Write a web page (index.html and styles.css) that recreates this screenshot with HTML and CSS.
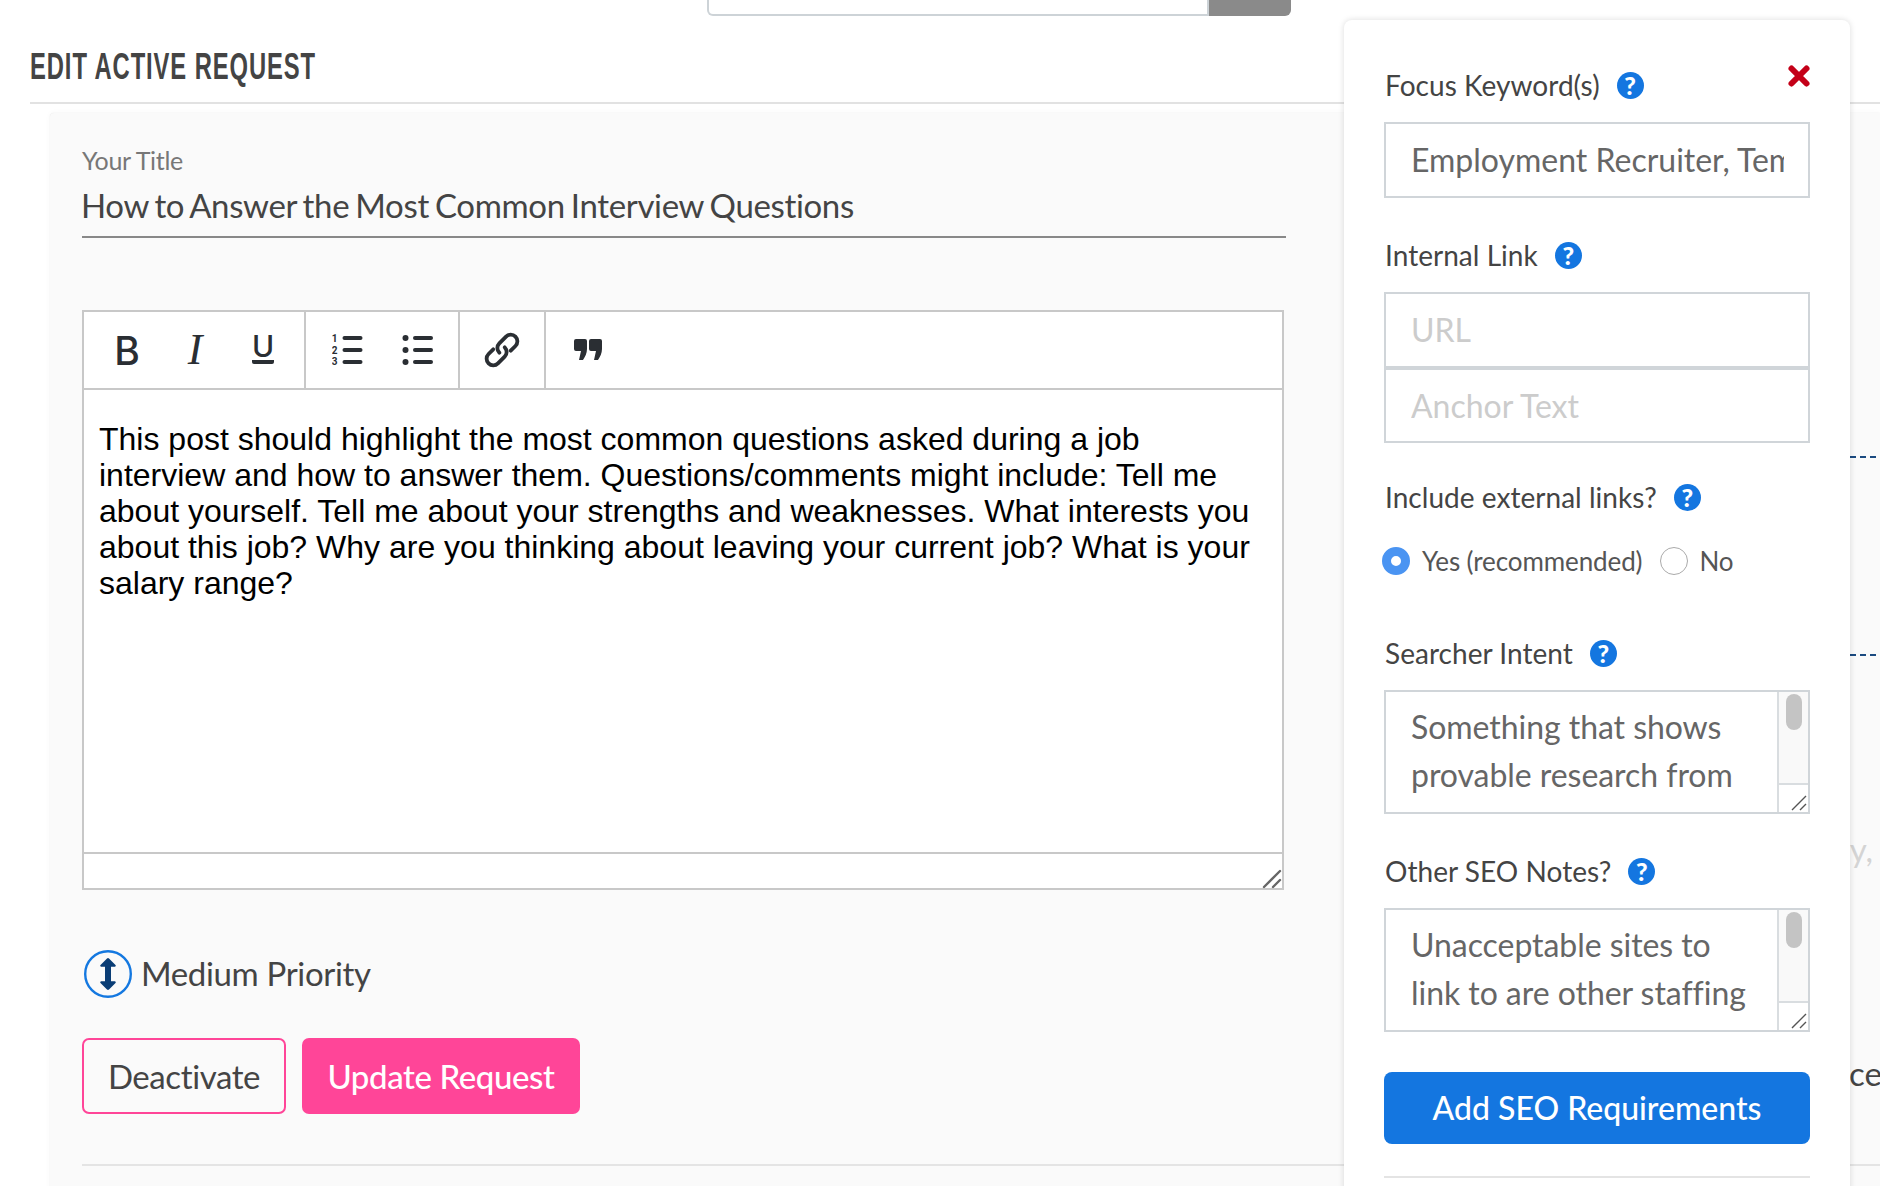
FILE: index.html
```html
<!DOCTYPE html>
<html lang="en">
<head>
<meta charset="utf-8">
<title>Edit Active Request</title>
<link rel="stylesheet" href="styles.css">
</head>
<body>
<div class="topbar"><div class="search-box"></div><div class="search-btn"></div></div>
<header class="page-head"><h1>EDIT ACTIVE REQUEST</h1></header>
<main class="card">
  <div class="card-row">
    <form class="form">
      <label class="title-label" for="title">Your Title</label>
      <input class="title-input" id="title" type="text" value="How to Answer the Most Common Interview Questions">
      <div class="editor">
        <div class="toolbar">
          <div class="tb-group g1">
            <span class="tb"><span class="ic-b">B</span></span>
            <span class="tb"><span class="ic-i">I</span></span>
            <span class="tb"><span class="ic-u">U</span></span>
          </div>
          <div class="tb-group g2">
            <span class="tb wide ol"><svg width="32" height="36" viewBox="0 0 32 36"><g class="num"><text x="2.5" y="9.5">1</text><text x="2.5" y="21.5">2</text><text x="2.5" y="33">3</text></g><rect x="10.500" y="4" width="20" height="4" rx="2"/><rect x="10.500" y="16" width="20" height="4" rx="2"/><rect x="10.500" y="28" width="20" height="4" rx="2"/></svg></span>
            <span class="tb wide"><svg width="32" height="36" viewBox="0 0 32 36"><circle cx="3.500" cy="6" r="3"/><circle cx="3.500" cy="18" r="3"/><circle cx="3.500" cy="30" r="3"/><rect x="11" y="4" width="20" height="4" rx="2"/><rect x="11" y="16" width="20" height="4" rx="2"/><rect x="11" y="28" width="20" height="4" rx="2"/></svg></span>
          </div>
          <div class="tb-group g3">
            <svg width="38" height="38" viewBox="0 0 40 40"><g class="chain" transform="rotate(-45 20 20)"><path d="M14 13H7a7 7 0 0 0 0 14H17a7 7 0 0 0 7-7"/><path d="M26 27H33a7 7 0 0 0 0-14H23a7 7 0 0 0-7 7"/></g></svg>
          </div>
          <div class="tb-group g4">
            <svg width="30" height="22" viewBox="0 0 30 22"><path d="M1 2a2 2 0 0 1 2-2h9a2 2 0 0 1 2 2v8c0 4-2 8-4 11H6l2-9H3a2 2 0 0 1-2-2z"/><path d="M16 2a2 2 0 0 1 2-2h9a2 2 0 0 1 2 2v8c0 4-2 8-4 11h-4l2-9h-5a2 2 0 0 1-2-2z"/></svg>
          </div>
        </div>
        <div class="editor-body">This post should highlight the most common questions asked during a job<br>interview and how to answer them. Questions/comments might include: Tell me<br>about yourself. Tell me about your strengths and weaknesses. What interests you<br>about this job? Why are you thinking about leaving your current job? What is your<br>salary range?</div>
        <div class="editor-foot"><svg class="grip" width="20" height="20" viewBox="0 0 20 20"><path d="M2 18L18 2M11 18l7-7"/></svg></div>
      </div>
      <div class="priority">
        <svg width="48" height="48" viewBox="0 0 48 48"><circle class="ring" cx="24" cy="24" r="22.800"/><path class="arrow" d="M23 8.500a1.500 1.500 0 0 1 2 0l6.500 6.500a1 1 0 0 1-.7 1.700H27V31.300h3.800a1 1 0 0 1 .7 1.700L25 39.500a1.500 1.500 0 0 1-2 0L16.500 33a1 1 0 0 1 .7-1.700H21V16.700h-3.800a1 1 0 0 1-.7-1.700z"/></svg>
        <span>Medium Priority</span>
      </div>
      <div class="actions">
        <button class="btn btn-outline" type="button">Deactivate</button>
        <button class="btn btn-solid" type="button">Update Request</button>
      </div>
    </form>
    <div class="behind">
      <div class="dash first"></div>
      <div class="dash second"></div>
      <div class="ghost">ncy,</div>
      <div class="ghost-dark">ance</div>
    </div>
  </div>
  <div class="card-rule"></div>
</main>

<aside class="panel">
  <div class="field-label first-label">
    <span>Focus Keyword(s)</span><span class="help">?</span>
    <svg class="close" width="24" height="24" viewBox="0 0 24 24"><path d="M4.500 4.500L19.500 19.500M19.500 4.500L4.500 19.500"/></svg>
  </div>
  <input class="text-input" type="text" value="Employment Recruiter, Temp Agency">

  <div class="field-label gap42"><span>Internal Link</span><span class="help">?</span></div>
  <input class="text-input tall" type="text" placeholder="URL">
  <input class="text-input joined" type="text" placeholder="Anchor Text">

  <div class="field-label gap39"><span>Include external links?</span><span class="help">?</span></div>
  <div class="radios">
    <input class="radio" type="radio" name="ext" id="yes" checked><label for="yes">Yes (recommended)</label>
    <input class="radio" type="radio" name="ext" id="no"><label for="no">No</label>
  </div>

  <div class="field-label gap64"><span>Searcher Intent</span><span class="help">?</span></div>
  <div class="ta">
    <div class="ta-text">Something that shows<br>provable research from</div>
    <div class="sb"><div class="sb-track"><div class="sb-thumb"></div></div><div class="sb-corner"><svg width="16" height="16" viewBox="0 0 16 16"><path d="M1 15L15 1M9 15l6-6"/></svg></div></div>
  </div>

  <div class="field-label gap42"><span>Other SEO Notes?</span><span class="help">?</span></div>
  <div class="ta">
    <div class="ta-text">Unacceptable sites to<br>link to are other staffing</div>
    <div class="sb"><div class="sb-track"><div class="sb-thumb"></div></div><div class="sb-corner"><svg width="16" height="16" viewBox="0 0 16 16"><path d="M1 15L15 1M9 15l6-6"/></svg></div></div>
  </div>

  <button class="add-btn" type="button">Add SEO Requirements</button>
  <div class="panel-rule"></div>
</aside>
</body>
</html>
```

FILE: styles.css
```css
* { box-sizing: border-box; }
html, body { margin: 0; padding: 0; }
body {
  position: relative;
  width: 1880px;
  height: 1186px;
  overflow: hidden;
  background: #fff;
  font-family: Lato, "Noto Sans", sans-serif;
  color: #444;
}

/* top strip */
.topbar { display: flex; width: 584px; height: 16px; margin-left: 707px; }
.search-box { flex: 1; border: 2px solid #cdd3d7; border-top: 0; border-radius: 0 0 0 6px; background: #fff; }
.search-btn { width: 82px; background: #8a8a8a; border-radius: 0 0 6px 0; }

/* heading */
.page-head { height: 88px; margin-left: 30px; border-bottom: 2px solid #e2e2e2; }
.page-head h1 {
  margin: 0;
  padding-top: 31px;
  font-family: "Liberation Sans Narrow", "Liberation Sans", sans-serif;
  font-size: 36px;
  line-height: 40px;
  font-weight: 700;
  letter-spacing: 1.4px;
  color: #444;
  white-space: nowrap;
  transform: scaleX(0.66);
  transform-origin: left center;
}

/* card */
.card {
  margin: 9px 0 0 50px;
  padding: 33px 0 0 32px;
  height: 1100px;
  background: #fafafa;
  box-shadow: 0 0 6px rgba(0,0,0,.035), 0 0 1px rgba(0,0,0,.12);
  border-radius: 4px 0 0 0;
}
.card-row { display: flex; }
.form { width: 1204px; flex: none; }
.title-label { display: block; height: 30px; padding-bottom: 2px; font-size: 25px; letter-spacing: -0.3px; line-height: 28px; color: #777; }
.title-input {
  display: block;
  width: 100%;
  height: 62px;
  padding: 0 0 2px;
  border: 0;
  border-bottom: 2px solid #888;
  background: transparent;
  font: 400 33px/58px Lato, sans-serif;
  letter-spacing: -0.35px;
  word-spacing: -2px;
  text-indent: -1px;
  color: #444;
  outline: none;
}

/* rich text editor */
.editor { width: 1202px; margin-top: 72px; border: 2px solid #c8c8c8; background: #fff; }
.toolbar { display: flex; height: 78px; border-bottom: 2px solid #c8c8c8; }
.tb-group { display: flex; align-items: center; border-right: 2px solid #c8c8c8; }
.g1 { width: 222px; padding-left: 9px; }
.g2 { width: 154px; padding-left: 5px; }
.g3 { width: 86px; justify-content: center; }
.g4 { flex: 1; border-right: 0; padding-left: 27px; }
.tb { display: flex; width: 68px; height: 76px; align-items: center; justify-content: center; color: #2a2e33; }
.tb.wide { width: 71px; }
.tb.ol svg { margin-left: 2px; }
.ic-b { font: 500 39px/1 Inter, Roboto, sans-serif; }
.ic-i { font: italic 400 44px/1 "Liberation Serif", serif; }
.ic-u { display: block; height: 28px; font: 500 30px/21px Inter, Roboto, sans-serif; border-bottom: 4px solid #2a2e33; border-radius: 2px; }
.toolbar svg { fill: #2a2e33; display: block; }
.num text { font: 700 10px Roboto, sans-serif; text-anchor: middle; }
.toolbar .chain path { fill: none; stroke: #2a2e33; stroke-width: 4; stroke-linecap: round; }

.editor-body {
  height: 464px;
  padding: 31px 15px 0;
  font: 400 32px/36px "Liberation Sans", Arial, sans-serif;
  color: #000;
  white-space: nowrap;
  border-bottom: 2px solid #c8c8c8;
}
.editor-foot { display: flex; height: 34px; justify-content: flex-end; align-items: flex-end; }
.grip { display: block; margin: 0 0 -1px; }
.grip path { fill: none; stroke: #666; stroke-width: 2.4; stroke-linecap: round; }

.priority { display: flex; align-items: center; gap: 9px; margin-top: 60px; margin-left: 2px; font-size: 33px; letter-spacing: -0.35px; line-height: 46px; color: #444; }
.priority span { padding-bottom: 2px; }
.priority svg { display: block; flex: none; }
.ring { fill: none; stroke: #1478e0; stroke-width: 2.4; }
.arrow { fill: #0a3d75; }

.actions { display: flex; gap: 16px; margin-top: 40px; }
.btn { height: 76px; padding: 0; border-radius: 7px; font: 400 33px/1 Lato, sans-serif; letter-spacing: -0.4px; cursor: pointer; }
.btn-outline { width: 204px; background: transparent; border: 2px solid #ff4598; color: #444; }
.btn-solid { width: 278px; background: #ff4598; border: 0; color: #fff; font-weight: 500; }

.card-rule { height: 2px; margin-top: 50px; background: #e4e4e4; }

/* what shows to the right of the panel */
.behind { display: flex; flex: 1; flex-direction: column; align-items: flex-end; overflow: hidden; white-space: nowrap; }
.dash {
  width: 30px;
  height: 2px;
  flex: none;
  background: repeating-linear-gradient(90deg, #1a4a80 0 6px, transparent 6px 10px);
}
.dash.first { margin-top: 310px; }
.dash.second { margin-top: 196px; }
.ghost { margin: 173px 7px 0 0; font-size: 33px; line-height: 40px; color: #d4d4d4; }
.ghost-dark { margin: 184px -2px 0 0; font-size: 33px; line-height: 40px; color: #444; }

/* SEO panel */
.panel {
  position: absolute;
  left: 1344px;
  top: 20px;
  width: 506px;
  height: 1220px;
  padding: 50px 40px 0;
  background: #fff;
  border-radius: 8px;
  box-shadow: 0 0 6px rgba(0,0,0,.14);
}
.field-label { display: flex; align-items: center; height: 32px; padding: 0 0 2px 1px; font-size: 28px; letter-spacing: 0.04px; line-height: 30px; color: #444; white-space: nowrap; }
.first-label { margin-bottom: 20px; }
.field-label.gap42 { margin-top: 42px; margin-bottom: 20px; }
.field-label.gap39 { margin-top: 39px; }
.field-label.gap64 { margin-top: 64px; margin-bottom: 20px; }
.help {
  display: flex;
  flex: none;
  width: 27px;
  height: 27px;
  margin-left: 17px;
  align-items: center;
  justify-content: center;
  border-radius: 50%;
  background: #1476e0;
  color: #fff;
  font: 900 25px/27px Lato, sans-serif;
}
.close { flex: none; margin: -18px -1px 0 auto; display: block; }
.close path { fill: none; stroke: #c40018; stroke-width: 6; stroke-linecap: round; }

.text-input {
  display: block;
  width: 426px;
  height: 76px;
  padding: 0 24px 2px 25px;
  border: 2px solid #d0d5d9;
  border-radius: 0;
  background: #fff;
  font: 400 32px/1 Lato, sans-serif;
  color: #666;
  outline: none;
}
.text-input.joined { height: 75px; padding-bottom: 0; }
.text-input::placeholder { color: #ccc; opacity: 1; }

.radios { display: flex; align-items: center; height: 26px; margin: 34px 0 0 -2px; font-size: 26px; letter-spacing: -0.1px; color: #555; white-space: nowrap; }
.radio {
  appearance: none;
  -webkit-appearance: none;
  display: block;
  flex: none;
  width: 28px;
  height: 28px;
  margin: 0;
  border: 1px solid #aaa;
  border-radius: 50%;
  background: #fff;
}
.radio:checked { border: 9px solid #4a94f2; background: #fff; }
.radios label:first-of-type { margin: 0 18px 0 12px; }
.radios label:last-of-type { margin-left: 11px; }

.ta { display: flex; width: 426px; height: 124px; margin-top: 1px; border: 2px solid #d0d5d9; background: #fff; }
.ta-text { flex: 1; padding: 11px 0 0 25px; font-size: 32px; line-height: 48px; letter-spacing: -0.05px; color: #666; white-space: nowrap; overflow: hidden; }
.sb { display: flex; flex: none; flex-direction: column; width: 31px; border-left: 2px solid #d9dde0; }
.sb-track { flex: 1; padding: 2px 0 0 7px; background: #f9f9f9; }
.sb-thumb { width: 16px; height: 36px; border-radius: 8px; background: #c4c4c4; }
.sb-corner { display: flex; height: 29px; align-items: flex-end; justify-content: flex-end; border-top: 2px solid #d9dde0; background: #fff; }
.sb-corner svg { display: block; margin: 0 1px 1px 0; }
.sb-corner path { fill: none; stroke: #555; stroke-width: 1.4; }

.add-btn {
  display: block;
  width: 426px;
  height: 72px;
  margin-top: 40px;
  border: 0;
  border-radius: 8px;
  background: #1476e0;
  color: #fff;
  font: 500 32px/1 Lato, sans-serif;
  cursor: pointer;
}
.panel-rule { height: 2px; margin-top: 32px; background: #e4e4e4; }
```
